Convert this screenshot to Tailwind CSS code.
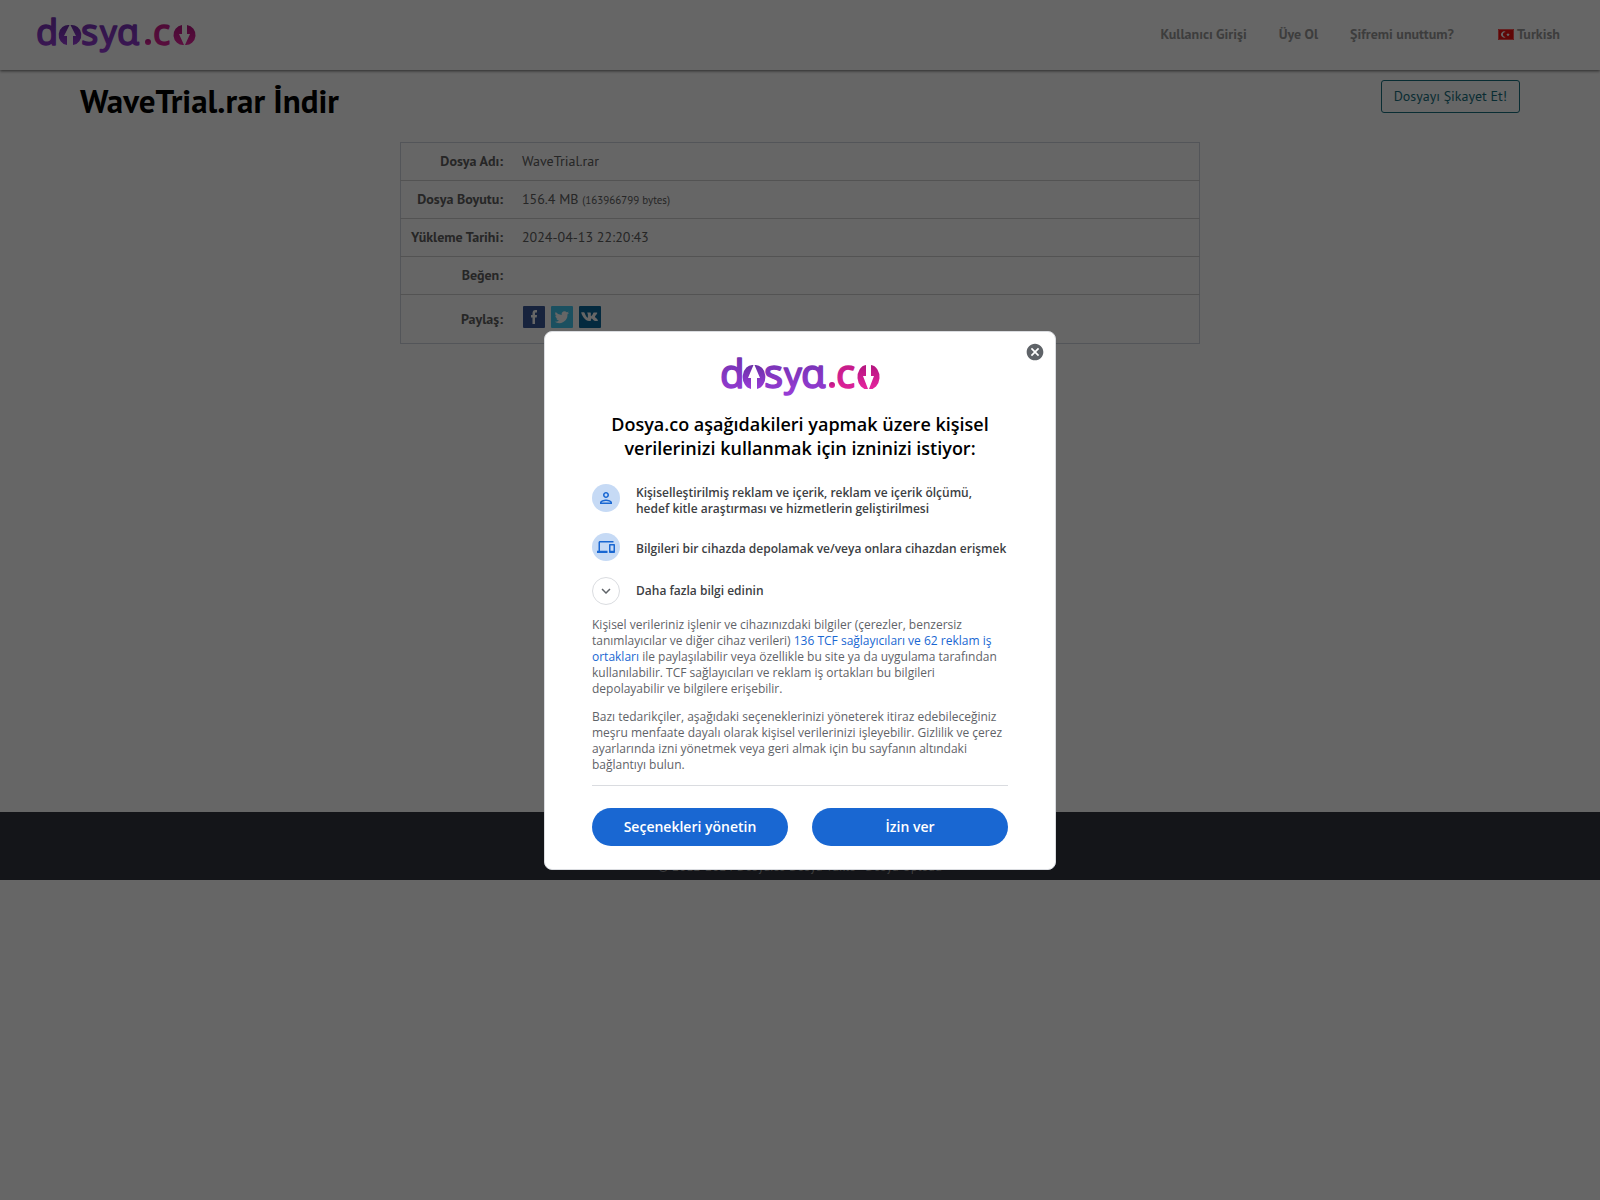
<!DOCTYPE html>
<html lang="tr">
<head>
    <meta charset="UTF-8">
    <meta name="viewport" content="width=device-width, initial-scale=1.0">
    <title>WaveTrial.rar İndir</title>
    <script src="https://cdn.jsdelivr.net/npm/@tailwindcss/browser@4"></script>
</head>
<body class="bg-white font-['PT_Sans','Lato',sans-serif] text-sm text-[#606060]">
    <header class="flex h-[70px] items-center justify-between pl-[37px] pr-10 shadow-[0_1px_3px_rgba(0,0,0,0.6)]">
        <a href="#" aria-label="dosya.co">
            <svg class="block h-[34px] w-[158px] overflow-visible" viewBox="0 0 158 34" font-family="Noto Sans" font-weight="400" font-size="36" stroke-width="1.5" stroke-linejoin="round">
                <defs>
                    <linearGradient id="purple" x1="0" y1="0" x2="0" y2="1"><stop offset="0" stop-color="#6a2fa6"/><stop offset="1" stop-color="#9a3dd8"/></linearGradient>
                    <linearGradient id="pink" x1="0" y1="0" x2="0" y2="1"><stop offset="0" stop-color="#b3157f"/><stop offset="1" stop-color="#e6259f"/></linearGradient>
                </defs>
                <g fill="url(#purple)" stroke="url(#purple)">
                    <text x="-1" y="27">d</text>
                    <path stroke="none" d="M32.500 7A9.500 10 0 0 0 30 27V18h-3zM33.500 7A9.500 10 0 0 1 36 27V18h3z"/>
                    <text x="44" y="27">s</text>
                    <text x="63" y="26" font-size="33">y</text>
                    <text x="80" y="27">ɑ</text>
                </g>
                <g fill="url(#pink)" stroke="url(#pink)">
                    <circle cx="111" cy="24" r="3" stroke="none"/>
                    <text x="116" y="27">c</text>
                    <path stroke="none" d="M147 27A9.500 10 0 0 1 145 7V16h-3zM148 27A9.500 10 0 0 0 150 7V16h3z"/>
                </g>
            </svg>
        </a>
        <nav class="flex items-center gap-8 pb-[2px] font-bold text-[#999]">
            <a href="#">Kullanıcı Girişi</a>
            <a href="#">Üye Ol</a>
            <a href="#">Şifremi unuttum?</a>
            <a href="#" class="ml-3 flex items-center gap-[3px]">
                <svg class="h-[11px] w-4" viewBox="0 0 16 11"><path fill="#f01010" d="M0 0h16v11H0z"/><path fill="none" stroke="#f55" d="M.5.5h15v10H.5z"/><path fill="#fff" d="M8 3.2A3 3 0 1 0 8 7.800A2.400 2.400 0 1 1 8 3.200zM10 3.800l.5 1.200 1.300.1-1 .8.3 1.300-1.100-.7-1.100.7.300-1.300-1-.8 1.300-.1z"/></svg>
                Turkish
            </a>
        </nav>
    </header>

    <main class="min-h-[742px] px-20 pt-[10px]">
        <div class="flex items-start justify-between">
            <h1 class="text-[33px] leading-[42px] font-bold text-black">WaveTrial.rar İndir</h1>
            <button type="button" class="h-[33px] rounded-[3px] border border-[#177080] px-3 pb-[2px] text-[#177080]">Dosyayı Şikayet Et!</button>
        </div>

        <table class="mx-auto mt-5 w-[800px] max-w-full border-collapse border border-[#d0d5de] leading-[17px]">
            <tbody>
                <tr class="h-[38px] border-b border-[#d0d0d0]">
                    <th class="w-[111px] px-[10px] text-right font-bold whitespace-nowrap">Dosya Adı:</th>
                    <td class="px-[9px]">WaveTrial.rar</td>
                </tr>
                <tr class="h-[38px] border-b border-[#d0d0d0]">
                    <th class="px-[10px] text-right font-bold whitespace-nowrap">Dosya Boyutu:</th>
                    <td class="px-[9px]">156.4 MB <small class="text-[11px]">(163966799 bytes)</small></td>
                </tr>
                <tr class="h-[38px] border-b border-[#d0d0d0]">
                    <th class="px-[10px] text-right font-bold whitespace-nowrap">Yükleme Tarihi:</th>
                    <td class="px-[9px]">2024-04-13 22:20:43</td>
                </tr>
                <tr class="h-[38px] border-b border-[#d0d0d0]">
                    <th class="px-[10px] text-right font-bold whitespace-nowrap">Beğen:</th>
                    <td class="px-[9px]"></td>
                </tr>
                <tr class="h-[49px]">
                    <th class="px-[10px] text-right font-bold whitespace-nowrap">Paylaş:</th>
                    <td class="px-[9px] pb-1">
                        <div class="flex gap-1">
                            <a href="#" aria-label="Facebook"><svg class="size-6" viewBox="0 0 24 24"><rect x="1" y="1" width="22" height="22" rx="1" fill="#3b5998"/><path fill="#fff" d="M10.500 19v-6.500H9V10h1.500V8.300C10.500 6.200 11.500 5 13.500 5H15v2.500h-1c-.8 0-1 .3-1 1V10h2l-.3 2.500H13V19z"/></svg></a>
                            <a href="#" aria-label="Twitter"><svg class="size-6" viewBox="0 0 24 24"><rect x="1" y="1" width="22" height="22" rx="1" fill="#45c8f0"/><path fill="#fff" d="M19 7.700c-.5.200-1.100.4-1.700.5.600-.4 1.100-1 1.300-1.600-.6.300-1.200.6-1.900.7a2.900 2.900 0 0 0-5 2.700A8.300 8.300 0 0 1 5.700 6.900a2.900 2.900 0 0 0 .9 3.900c-.5 0-.9-.1-1.300-.4 0 1.500 1 2.700 2.300 3-.4.100-.9.100-1.300 0 .4 1.200 1.500 2 2.700 2A5.900 5.900 0 0 1 4.700 16.700 8.300 8.300 0 0 0 17.500 9.300c.6-.4 1.100-.9 1.500-1.600z"/></svg></a>
                            <a href="#" aria-label="VK"><svg class="size-6" viewBox="0 0 24 24"><rect x="1" y="1" width="22" height="22" rx="1" fill="#0a6a9f"/><path fill="#fff" transform="translate(2 2.500) scale(.82)" d="M11.300 16.500h1.200s.4 0 .6-.3c.2-.2.200-.6.200-.6s0-1.800.8-2.100c.8-.2 1.800 1.800 2.900 2.500.8.600 1.400.4 1.400.4h2.600s1.400-.1.700-1.200c-.1-.1-.4-.9-2.200-2.500-1.800-1.700-1.600-1.400.6-4.300 1.300-1.800 1.400-2.400-.2-2.400h-2.800c-.4 0-.6.200-.7.400 0 0-1.100 2.600-2.300 3.800-.7.700-.9.400-.9-.3V6.800c0-.6-.2-.8-.7-.8H9.300c-.4 0-.6.300-.6.500 0 .6.900.7.900 2.300v2.700c0 .8-.1.900-.4.900-.8 0-2.500-2.700-3.500-5.800-.2-.6-.4-.8-1-.8H2.200s-.8 0-.7.700C1.900 8.500 5.500 16.500 11.300 16.500z"/></svg></a>
                        </div>
                    </td>
                </tr>
            </tbody>
        </table>
    </main>

    <footer class="flex h-[68px] items-end justify-center bg-[#333640] pb-1 text-[13px] text-[#999]">
        <p class="leading-[18px]">© 2012-2024 Dosya.co Dosya Yükle - Dosya Upload</p>
    </footer>

    <!-- Consent dialog -->
    <div class="fixed inset-0 flex items-center justify-center bg-black/60 font-['Open_Sans',sans-serif]">
        <div role="dialog" aria-modal="true" aria-labelledby="consent-title" class="relative w-[512px] rounded-lg border border-[#dadce0] bg-white px-[47px] pt-6 pb-[23px]">
            <button type="button" aria-label="Kapat" class="absolute top-[10px] right-[10px]">
                <svg class="block size-5" viewBox="0 0 24 24"><path fill="#5f6368" d="M12 2C6.470 2 2 6.470 2 12s4.470 10 10 10 10-4.470 10-10S17.530 2 12 2zm5 13.590L15.590 17 12 13.410 8.410 17 7 15.590 10.590 12 7 8.410 8.410 7 12 10.590 15.590 7 17 8.410 13.410 12 17 15.590z"/></svg>
            </button>

            <svg class="mx-auto block h-10 w-[158px] overflow-visible" viewBox="0 0 158 40" role="img" aria-label="dosya.co" font-family="Noto Sans" font-weight="400" font-size="40" stroke-width="1.5" stroke-linejoin="round">
                <g fill="url(#purple)" stroke="url(#purple)">
                    <text x="-1" y="32">d</text>
                    <path stroke="none" d="M32.500 9A9.500 12 0 0 0 30 33V22h-3zM33.500 9A9.500 12 0 0 1 36 33V22h3z"/>
                    <text x="43" y="32">s</text>
                    <text x="63" y="31" font-size="35">y</text>
                    <text x="80" y="32">ɑ</text>
                </g>
                <g fill="url(#pink)" stroke="url(#pink)">
                    <circle cx="111" cy="29" r="3" stroke="none"/>
                    <text x="115" y="32">c</text>
                    <path stroke="none" d="M147 33A9.500 12 0 0 1 145 9V20h-3zM148 33A9.500 12 0 0 0 150 9V20h3z"/>
                </g>
            </svg>

            <h2 id="consent-title" class="mt-4 text-center text-lg leading-6 font-semibold text-black">Dosya.co aşağıdakileri yapmak üzere kişisel verilerinizi kullanmak için izninizi istiyor:</h2>

            <ul class="mt-6 flex flex-col gap-4 text-xs leading-4 font-semibold text-[#3c4043]">
                <li class="flex min-h-[33px] items-start gap-4">
                    <span class="flex size-7 shrink-0 items-center justify-center rounded-full bg-[#c6daf5]">
                        <svg class="size-[18px]" viewBox="0 0 24 24"><path fill="#1967d2" d="M12 6c1.100 0 2 .9 2 2s-.9 2-2 2-2-.9-2-2 .9-2 2-2m0 10c2.700 0 5.800 1.290 6 2H6c.23-.72 3.310-2 6-2m0-12C9.790 4 8 5.790 8 8s1.790 4 4 4 4-1.790 4-4-1.790-4-4-4zm0 10c-2.670 0-8 1.340-8 4v2h16v-2c0-2.660-5.330-4-8-4z"/></svg>
                    </span>
                    <span class="self-end">Kişiselleştirilmiş reklam ve içerik, reklam ve içerik ölçümü, hedef kitle araştırması ve hizmetlerin geliştirilmesi</span>
                </li>
                <li class="flex items-center gap-4">
                    <span class="flex size-7 shrink-0 items-center justify-center rounded-full bg-[#c6daf5]">
                        <svg class="size-[18px]" viewBox="0 0 24 24"><path fill="#1967d2" d="M4 6h18V4H4c-1.100 0-2 .9-2 2v11H0v3h14v-3H4V6zm19 2h-6c-.55 0-1 .45-1 1v10c0 .55.45 1 1 1h6c.55 0 1-.45 1-1V9c0-.55-.45-1-1-1zm-1 9h-4v-7h4v7z"/></svg>
                    </span>
                    <span class="pt-1 whitespace-nowrap">Bilgileri bir cihazda depolamak ve/veya onlara cihazdan erişmek</span>
                </li>
                <li>
                    <button type="button" class="flex items-center gap-4">
                        <span class="flex size-7 items-center justify-center rounded-full border border-[#dadce0]">
                            <svg class="size-[18px]" viewBox="0 0 24 24"><path fill="#5f6368" d="M7.410 8.590L12 13.170l4.590-4.580L18 10l-6 6-6-6z"/></svg>
                        </span>
                        Daha fazla bilgi edinin
                    </button>
                </li>
            </ul>

            <div class="border-b border-[#dadce0] py-3 text-xs leading-4 text-[#5f6368]">
                <p>Kişisel verileriniz işlenir ve cihazınızdaki bilgiler (çerezler, benzersiz tanımlayıcılar ve diğer cihaz verileri) <a href="#" class="text-[#1967d2]">136 TCF sağlayıcıları ve 62 reklam iş ortakları</a> ile paylaşılabilir veya özellikle bu site ya da uygulama tarafından kullanılabilir. TCF sağlayıcıları ve reklam iş ortakları bu bilgileri depolayabilir ve bilgilere erişebilir.</p>
                <p class="mt-3">Bazı tedarikçiler, aşağıdaki seçeneklerinizi yöneterek itiraz edebileceğiniz meşru menfaate dayalı olarak kişisel verilerinizi işleyebilir. Gizlilik ve çerez ayarlarında izni yönetmek veya geri almak için bu sayfanın altındaki bağlantıyı bulun.</p>
            </div>

            <div class="mt-[22px] grid grid-cols-2 gap-6 text-sm font-semibold text-white">
                <button type="button" class="h-[38px] rounded-full bg-[#1967d2]">Seçenekleri yönetin</button>
                <button type="button" class="h-[38px] rounded-full bg-[#1967d2]">İzin ver</button>
            </div>
        </div>
    </div>
</body>
</html>
